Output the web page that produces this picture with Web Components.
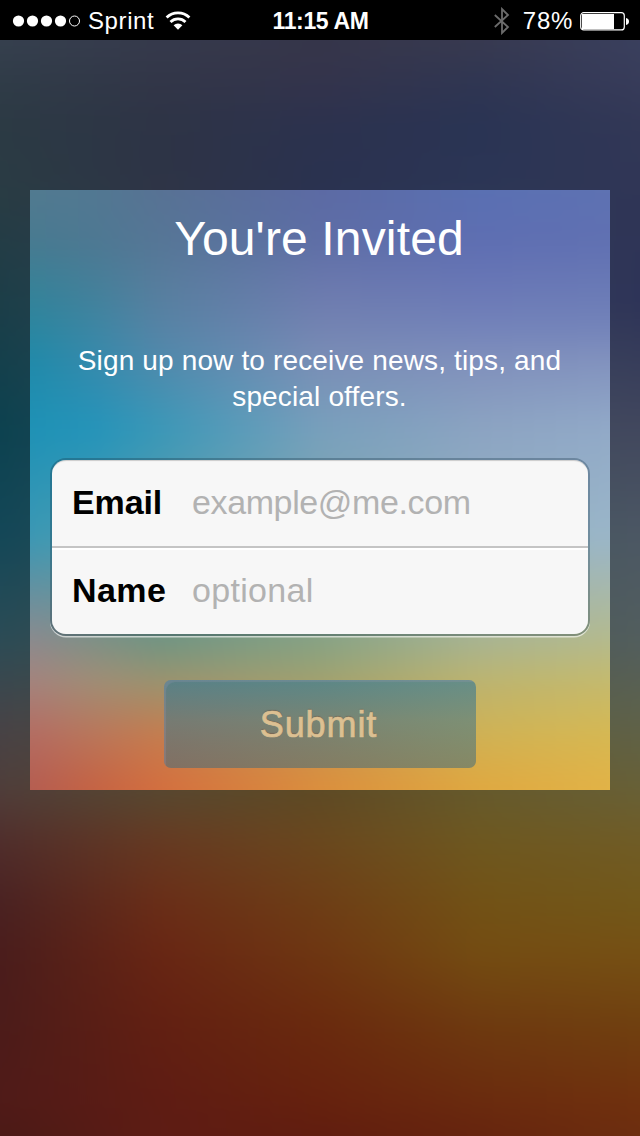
<!DOCTYPE html>
<html lang="en">
<head>
<meta charset="utf-8">
<title>You're Invited</title>
<style>
html,body{margin:0;height:100%;background:#000}
body{font-family:"Liberation Sans",Arial,sans-serif;color:#fff;overflow:hidden}
</style>
</head>
<body>
<invite-screen>
  <status-bar slot="status" carrier="Sprint" time="11:15 AM" battery="78%"></status-bar>
  <invite-card>
    <span slot="title">You're Invited</span>
    <span slot="message">Sign up now to receive news, tips, and special offers.</span>
    <form-field label="Email"><span style="letter-spacing:-.38px">example@me.com</span></form-field>
    <form-field label="Name" class="last"><span style="letter-spacing:.3px">optional</span></form-field>
    <submit-button slot="action">Submit</submit-button>
  </invite-card>
</invite-screen>
<script>
const attach = (host, html) => {
  const root = host.attachShadow({mode:'open'});
  const t = document.createElement('template');
  t.innerHTML = html;
  root.append(t.content.cloneNode(true));
  return root;
};

// Each mesh: column positions, then rows of [y, colours], in px of the mesh's own box.
const MESHES = {
  backdrop: {
    xs: [0,160,320,480,640],
    rows: [
      [40,  [[54,64,78],[54,58,76],[54,54,74],[56,58,80],[58,64,94]]],
      [80,  [[48,60,72],[50,54,72],[52,52,76],[48,54,82],[56,60,90]]],
      [125, [[44,58,68],[46,52,70],[44,50,78],[42,52,84],[50,56,86]]],
      [190, [[42,60,68],[46,52,70],[42,50,80],[44,54,86],[48,54,86]]],
      [300, [[28,62,72],[50,70,84],[54,62,86],[54,62,88],[46,52,88]]],
      [430, [[12,66,80],[40,74,86],[56,76,90],[64,76,94],[66,72,94]]],
      [540, [[20,72,88],[46,76,84],[60,80,86],[70,86,94],[76,88,100]]],
      [640, [[44,76,86],[60,76,74],[70,80,70],[76,88,84],[82,94,94]]],
      [720, [[70,68,72],[78,74,62],[84,80,56],[90,90,66],[94,98,74]]],
      [790, [[80,62,58],[88,72,48],[94,74,36],[102,90,44],[104,96,54]]],
      [841, [[80,46,44],[102,58,34],[106,72,30],[110,88,32],[112,92,38]]],
      [902, [[74,34,34],[106,46,24],[110,62,22],[114,82,22],[114,88,26]]],
      [955, [[74,29,28],[104,38,20],[110,54,18],[116,76,18],[118,80,20]]],
      [1025,[[76,28,26],[98,32,18],[106,42,14],[110,58,16],[112,64,16]]],
      [1106,[[80,27,24],[94,28,20],[102,33,14],[106,42,14],[112,48,14]]],
      [1140,[[74,26,22],[94,28,20],[96,29,16],[102,36,14],[108,46,16]]]
    ]
  },
  card: {
    xs: [0,65,130,290,450,580],
    rows: [
      [0,   [[82,122,144],[82,120,146],[88,114,148],[92,106,164],[90,112,178],[94,114,178]]],
      [50,  [[72,122,144],[78,120,146],[86,118,150],[94,110,166],[94,110,178],[96,112,178]]],
      [100, [[54,130,152],[68,128,154],[88,126,158],[108,122,174],[106,120,182],[106,122,182]]],
      [140, [[42,134,160],[60,134,164],[86,132,166],[116,132,178],[116,132,186],[116,132,186]]],
      [170, [[32,138,170],[54,138,172],[80,138,172],[122,142,182],[128,144,188],[130,146,190]]],
      [240, [[30,146,182],[36,148,186],[58,152,184],[120,160,188],[140,164,194],[146,170,200]]],
      [350, [[60,152,180],[76,156,176],[96,158,170],[130,170,176],[150,180,196],[154,182,200]]],
      [450, [[140,138,142],[126,144,134],[112,148,130],[134,162,132],[168,180,146],[180,186,142]]],
      [490, [[164,132,126],[160,142,118],[154,148,112],[160,162,112],[188,180,112],[196,186,110]]],
      [545, [[180,108,98],[186,118,90],[198,124,78],[200,148,80],[208,178,84],[214,184,82]]],
      [600, [[180,92,80],[198,98,66],[212,110,62],[220,142,60],[224,168,64],[226,178,70]]]
    ]
  }
};

// Rows of horizontal gradients, each faded in vertically over the row before it.
customElements.define('color-mesh', class extends HTMLElement {
  connectedCallback(){
    const {xs, rows} = MESHES[this.getAttribute('name')];
    const B = 40;
    const layers = rows.map(([y,cs],i)=>{
      const from = i ? rows[i-1][0] : 0;
      const g = cs.map((c,j)=>`rgb(${c}) ${xs[j]+B}px`).join(',');
      const mask = i ? `mask-image:linear-gradient(to bottom,transparent ${from+B}px,#000 ${y+B}px);` : '';
      return `<div style="background:linear-gradient(to right,${g});${mask}"></div>`;
    }).join('');
    attach(this, `<style>:host{position:absolute;inset:0;z-index:-1;overflow:hidden}
      section{position:absolute;inset:0;filter:blur(12px)}
      div{position:absolute;inset:-${B}px}</style><section>${layers}</section>`);
  }
});

customElements.define('status-bar', class extends HTMLElement {
  connectedCallback(){
    const a = n => this.getAttribute(n);
    attach(this, `<style>
      :host{display:grid;grid-template-columns:1fr auto 1fr;align-items:center;height:40px;background:#000;font-size:24px;line-height:40px;padding:0 11px 0 12px;box-sizing:border-box}
      .side{display:flex;align-items:center;height:40px}
      .right{justify-content:flex-end}
      svg{display:block;flex:none}
      .carrier{margin:1px 11px 0 7px;letter-spacing:.6px}
      .time{font-weight:bold;font-size:23px;letter-spacing:-.35px;margin-top:1px}
      .pct{margin:1px 7px 0 12px;letter-spacing:.7px}
    </style>
    <div class="side">
      <svg width="69" height="14" viewBox="0 0 69 14"><g fill="#fff"><circle cx="6.5" cy="7" r="5.6"/><circle cx="20.5" cy="7" r="5.6"/><circle cx="34.5" cy="7" r="5.6"/><circle cx="48.5" cy="7" r="5.6"/></g><circle cx="62.5" cy="7" r="5" fill="none" stroke="#fff"/></svg>
      <span class="carrier">${a('carrier')}</span>
      <svg width="26" height="20" viewBox="0 0 26 20"><g fill="none" stroke="#fff" stroke-width="2.8"><path d="M1.6 6.6a16.2 16.2 0 0 1 22.8 0"/><path d="M5.5 10.9a10.8 10.8 0 0 1 15 0"/></g><path d="M8.6 14.2a6.4 6.4 0 0 1 8.8 0L13 18.8z" fill="#fff"/></svg>
    </div>
    <span class="time">${a('time')}</span>
    <div class="side right">
      <svg width="17" height="28" viewBox="0 0 17 28"><path d="M.8 8 14 20l-6 6V2l6 6L.8 20" fill="none" stroke="#6c6c6c" stroke-width="1.8"/></svg>
      <span class="pct">${a('battery')}</span>
      <svg width="49" height="20" viewBox="0 0 49 20"><rect x=".7" y="1.7" width="43.6" height="17.2" rx="3" fill="none" stroke="#fff" stroke-width="1.2"/><path d="M2 3h32v15H2z" fill="#fff"/><path d="M46 7q3 .8 3 3.5T46 14z" fill="#fff"/></svg>
    </div>`);
  }
});

customElements.define('form-field', class extends HTMLElement {
  connectedCallback(){
    attach(this, `<style>
      :host{display:flex;align-items:center;height:86px;padding:0 0 2px 20px;font-size:34px;text-align:left;box-sizing:border-box;background:#f7f7f7;border-radius:14px 14px 0 0;box-shadow:inset 0 2px 1px -1px rgba(0,0,0,.18)}
      :host(.last){border-radius:0 0 14px 14px;box-shadow:inset 0 2px #fff}
      b{width:120px;color:#000;letter-spacing:-.1px}
      :host(.last) b{letter-spacing:.4px}
      ::slotted(span){color:#b2b2b2}
    </style><b>${this.getAttribute('label')}</b><slot></slot>`);
  }
});

customElements.define('submit-button', class extends HTMLElement {
  connectedCallback(){
    attach(this, `<style>
      :host{display:flex;align-items:center;justify-content:center;width:312px;height:88px;box-sizing:border-box;border-radius:7px;
        background:linear-gradient(rgba(42,116,152,.58),rgba(62,116,138,.55) 45%,rgba(66,108,124,.55));
        box-shadow:inset 4px 4px 1px -2px rgba(168,156,190,.22);
        font-size:36px;color:#dcc092;letter-spacing:.9px;-webkit-text-stroke:.7px #dcc092;text-shadow:0 -1px 1px rgba(110,50,30,.35)}
      span{padding:2px 3px 0 0}
    </style><span><slot></slot></span>`);
  }
});

customElements.define('invite-card', class extends HTMLElement {
  connectedCallback(){
    attach(this, `<style>
      :host{display:flex;flex-direction:column;align-items:center;width:580px;height:600px;box-sizing:border-box;margin:150px auto 0;position:relative;isolation:isolate;text-align:center}
      h1{font-size:48px;line-height:56px;font-weight:normal;margin:21px 2px 0 0;letter-spacing:.15px}
      p{font-size:28px;line-height:36px;width:500px;margin:76px 1px 0 0;letter-spacing:.15px}
      .fields{align-self:stretch;margin:43px 20px 0;height:178px;box-sizing:border-box;padding:2px;position:relative}
      .fields::before{content:"";position:absolute;inset:0;border:2px solid rgba(20,50,70,.3);border-radius:16px;box-shadow:0 1.5px rgba(255,255,255,.6)}
      .fields::after{content:"";position:absolute;left:0;right:0;top:88px;height:2px;background:linear-gradient(to right,transparent 2px,#c4c4c4 0 538px,transparent 0)}
      .stack{display:flex;flex-direction:column;gap:2px;position:relative}
      .action{margin-top:44px}
    </style>
    <color-mesh name="card"></color-mesh>
    <h1><slot name="title"></slot></h1>
    <p><slot name="message"></slot></p>
    <div class="fields"><div class="stack"><slot></slot></div></div>
    <div class="action"><slot name="action"></slot></div>`);
  }
});

customElements.define('invite-screen', class extends HTMLElement {
  connectedCallback(){
    attach(this, `<style>
      :host{display:block;position:relative;width:640px;height:1136px;overflow:hidden;isolation:isolate}
    </style><color-mesh name="backdrop"></color-mesh><slot name="status"></slot><slot></slot>`);
  }
});
</script>
</body>
</html>
